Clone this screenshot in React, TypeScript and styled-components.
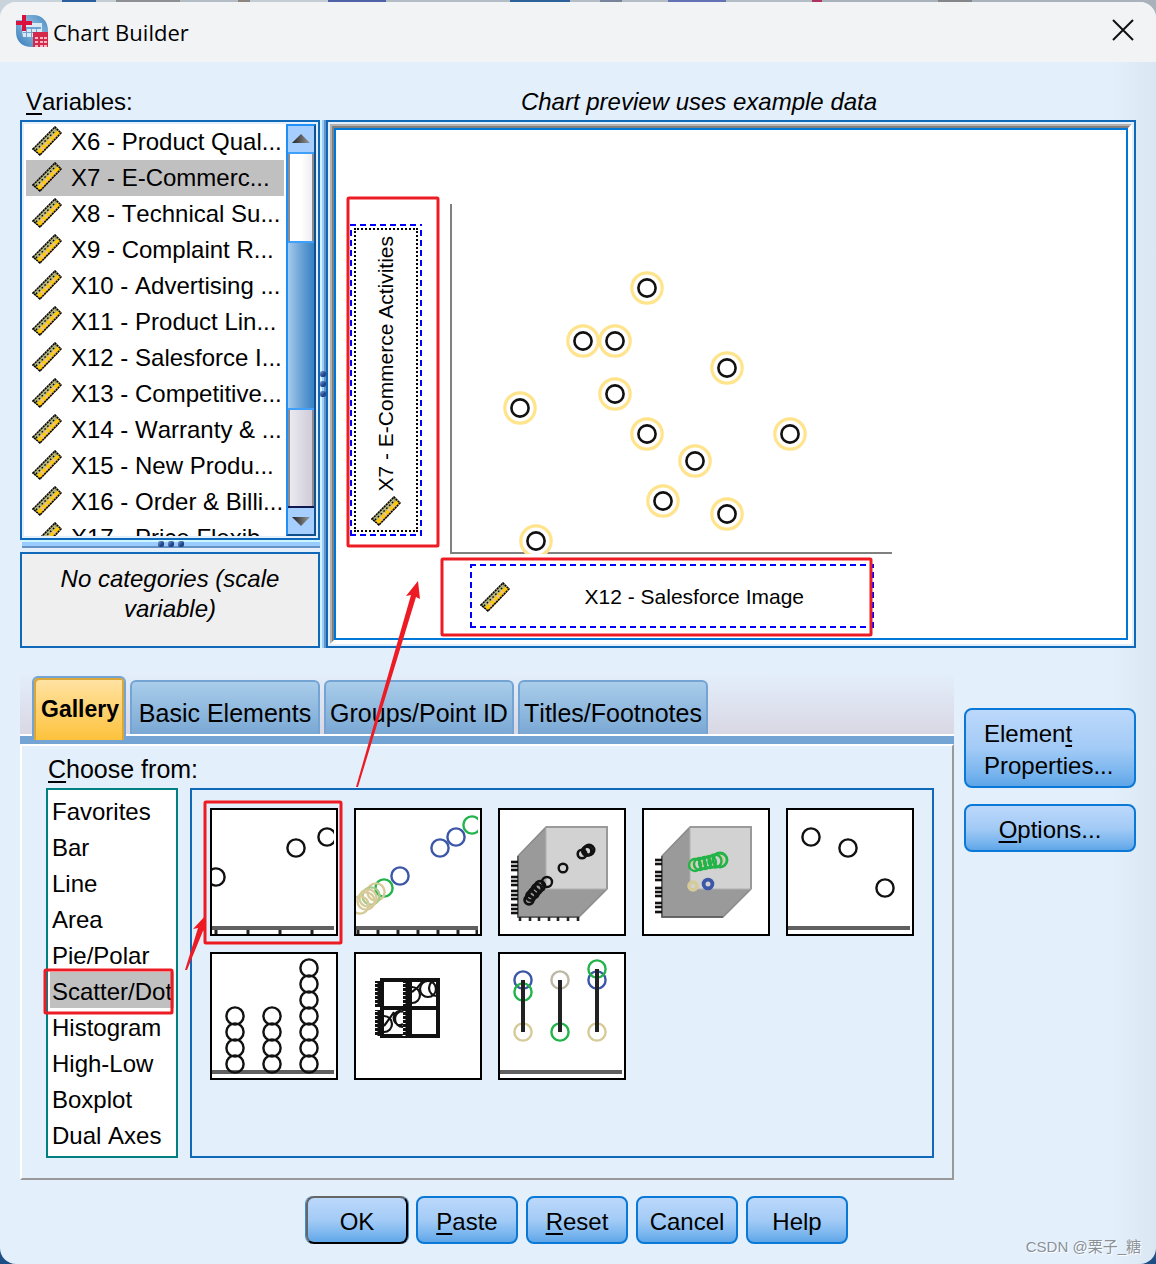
import React from "react";
import styled, { createGlobalStyle, css } from "styled-components";

const blue = "#1068b8";
const surface = "#e3effb";
const sans = `"Liberation Sans", Arial, sans-serif`;

const GlobalStyle = createGlobalStyle`
  *, *::before, *::after { box-sizing: border-box; }
  body {
    margin: 0;
    background: #8fa3b5;
    color: #000;
    font-family: ${sans};
    font-size: 24px;
    font-kerning: none;
  }
  button { font: inherit; font-kerning: none; color: inherit; margin: 0; cursor: pointer; }
  ul { list-style: none; margin: 0; padding: 0; }
`;

const Desktop = styled.div`
  min-height: 100vh;
  display: flex;
  flex-direction: column;
  padding-top: 2px;
  background: linear-gradient(
      90deg,
      #c9d3dc 0 62px, #2c5f9e 62px 96px, #c4ccd4 96px 116px, #8d8f93 116px 180px,
      #b4bdc5 180px 238px, #8c8580 238px 250px, #c4ccd4 250px 328px, #4f62a8 328px 386px,
      #b4bdc5 386px 510px, #2c6299 510px 570px, #b4bdc5 570px 600px, #77839a 600px 622px,
      #b4bdc5 622px 668px, #6272b4 668px 726px, #b4bdc5 726px 812px, #b03060 812px 822px,
      #a9b2ba 822px 938px, #84868a 938px 972px, #a9b2ba 972px
    ) top / 100% 20px no-repeat,
    #1d4f86;
`;

const Window = styled.main`
  position: relative;
  flex: 1;
  display: flex;
  flex-direction: column;
  border-radius: 16px;
  overflow: hidden;
  background: linear-gradient(270deg, #dbe6f3, ${surface} 44px);
`;

const TitleBar = styled.header`
  display: flex;
  align-items: center;
  height: 60px;
  padding: 0 20px 2px 16px;
  gap: 5px;
  background: #f2f3f5;
`;

const WindowTitle = styled.h1`
  flex: 1;
  margin: 0;
  padding-top: 2px;
  font: 400 22px/32px "Open Sans", "Noto Sans", sans-serif;
`;

const CloseButton = styled.button`
  display: grid;
  place-items: center;
  width: 26px;
  height: 28px;
  padding: 0 0 2px;
  border: 0;
  background: none;
`;

const Content = styled.div`
  display: flex;
  flex-direction: column;
  padding: 0 20px 20px;
`;

const Key = styled.span`
  text-decoration: underline;
  text-decoration-thickness: 2px;
  text-underline-offset: 3px;
  text-decoration-skip-ink: none;
`;

const Headings = styled.div`
  display: grid;
  grid-template-columns: 300px 1fr;
  column-gap: 6px;
  height: 58px;
  padding-top: 24px;
  line-height: 32px;
`;

const VariablesHeading = styled.span`
  padding-left: 6px;
`;

const PreviewHeading = styled.span`
  text-align: center;
  font-style: italic;
  padding-right: 64px;
`;

const Workspace = styled.section`
  display: flex;
  height: 528px;
`;

const VariableColumn = styled.div`
  display: flex;
  flex-direction: column;
  width: 300px;
`;

const VariableBox = styled.div`
  display: flex;
  height: 420px;
  padding: 2px;
  border: 2px solid ${blue};
  background: ${surface};
`;

const VariableList = styled.ul`
  flex: 1;
  min-width: 0;
  overflow: hidden;
  padding: 0 2px;
  background: #fff;
`;

const Variable = styled.li<{ $selected?: boolean }>`
  display: flex;
  align-items: center;
  gap: 9px;
  height: 36px;
  padding-left: 6px;
  line-height: 38px;
  white-space: nowrap;
  background: ${(p) => (p.$selected ? "#c0c0c0" : "transparent")};

  svg { flex: none; margin-bottom: 2px; }
`;

const ScrollBar = styled.div`
  display: flex;
  flex-direction: column;
  width: 30px;
  border: solid;
  border-width: 2px;
  border-color: #2090f8 #10508c #10508c #2090f8;
`;

const ScrollButton = styled.button<{ $down?: boolean }>`
  display: grid;
  place-items: center;
  height: 28px;
  padding: 0;
  border: 0 solid ${(p) => (p.$down ? "#101850" : "#409ff8")};
  border-width: ${(p) => (p.$down ? "2px 0 0" : "0 0 2px")};
  background: #a6ceff;

  svg { transform: ${(p) => (p.$down ? "scaleY(-1)" : "none")}; }
`;

const Track = styled.div<{ $lower?: boolean }>`
  flex: ${(p) => (p.$lower ? "97" : "88")};
  border: solid #8c8c90;
  border-width: 0 2px;
  background: ${(p) =>
    p.$lower ? "linear-gradient(90deg, #ebe9f0, #cfccd9)" : "linear-gradient(90deg, #fff 50%, #eeeef2)"};
`;

const Thumb = styled.div`
  flex: 168;
  border: solid #409ff8;
  border-width: 2px 0;
  background: linear-gradient(90deg, #a5caeb, #6ba3d6 50%, #3580c4);
`;

const RowSplitter = styled.div`
  display: flex;
  justify-content: center;
  align-items: center;
  gap: 4px;
  height: 8px;
  margin: 0 0 4px 2px;
  border-top: 2px solid #cdf6ff;
  border-bottom: 2px solid #6492c4;
  background: #99ccff;
`;

const ColumnSplitter = styled.div`
  display: flex;
  flex-direction: column;
  justify-content: center;
  align-items: center;
  gap: 4px;
  width: 6px;
  border-left: 2px solid #d4f2ff;
  border-right: 2px solid #6492c4;
  background: #99ccff;
`;

const Grip = styled.i`
  flex: none;
  width: 6px;
  height: 6px;
  border-radius: 2px;
  background: linear-gradient(135deg, #7fa6d6, #24448a 60%);
`;

const CategoryNote = styled.p`
  flex: 1;
  margin: 0;
  padding: 10px 16px;
  border: 2px solid ${blue};
  background: #efefef;
  font-style: italic;
  line-height: 30px;
  text-align: center;
`;

const PreviewFrame = styled.div`
  flex: 1;
  display: flex;
  min-width: 0;
  padding: 2px;
  border: 2px solid ${blue};
  background: ${surface};
`;

const Bevel = styled.div<{ $shade: string }>`
  flex: 1;
  display: flex;
  border: 2px solid;
  border-color: ${(p) => p.$shade} #fff #fff ${(p) => p.$shade};
`;

const Canvas = styled.div`
  flex: 1;
  display: grid;
  grid-template: 350px 64px / 72px 442px;
  gap: 10px 28px;
  padding: 74px 0 0 14px;
  border: 2px solid #0078d7;
  background: #fff;
`;

const dashed = (color: string) => css`
  background-image:
    repeating-linear-gradient(90deg, ${color} 0 6px, transparent 6px 10px),
    repeating-linear-gradient(90deg, ${color} 0 6px, transparent 6px 10px),
    repeating-linear-gradient(0deg, ${color} 0 6px, transparent 6px 10px),
    repeating-linear-gradient(0deg, ${color} 0 6px, transparent 6px 10px);
  background-size: 100% 2px, 100% 2px, 2px 100%, 2px 100%;
  background-position: top, bottom, left, right;
  background-repeat: no-repeat;
`;

const YZone = styled.div`
  margin: 20px 0 18px;
  padding: 4px;
  ${dashed("#0000ff")}
`;

const YZoneFocus = styled.div`
  display: flex;
  flex-direction: column;
  justify-content: flex-end;
  align-items: center;
  gap: 4px;
  height: 100%;
  padding-bottom: 4px;
  border: 2px dotted #000;
`;

const YLabel = styled.span`
  writing-mode: vertical-rl;
  transform: rotate(180deg);
  font-size: 21px;
  line-height: 24px;
  white-space: nowrap;
`;

const XZone = styled.div`
  grid-column: 2;
  display: flex;
  align-items: center;
  margin: 0 18px 0 20px;
  padding: 2px 70px 0 10px;
  ${dashed("#0000ff")}
`;

const XLabel = styled.span`
  flex: 1;
  text-align: right;
  font-size: 21px;
  line-height: 24px;
`;

const Lower = styled.section`
  display: flex;
  gap: 10px;
  margin-top: 24px;
`;

const Tabs = styled.div`
  flex: 1;
  min-width: 0;
`;

const TabStrip = styled.div`
  display: flex;
  align-items: flex-end;
  gap: 4px;
  height: 64px;
  padding-left: 12px;
  border-bottom: 2px solid #fff;
  background: linear-gradient(${surface}, #d9d7e4);
`;

const Tab = styled.button`
  min-width: 190px;
  height: 54px;
  padding: 10px 4px 0;
  border: 2px solid #73a4d4;
  border-bottom: 0;
  border-radius: 6px 6px 0 0;
  background: linear-gradient(#a9cdea, #7aa8d4);
  font-size: 25px;
  line-height: 30px;
  white-space: nowrap;
`;

const ActiveTab = styled(Tab)`
  z-index: 1;
  min-width: 94px;
  height: 64px;
  margin-bottom: -6px;
  padding: 0 2px 0 4px;
  background: linear-gradient(#ffe3a6, #fdc23c);
  box-shadow: inset 2px 2px #d9a63a, inset -2px 0 #d9a63a;
  font-size: 23px;
  font-weight: 700;
`;

const TabPanel = styled.div`
  padding: 0 18px 20px 24px;
  border: 2px solid;
  border-color: #fff #999 #999 #fff;
`;

const Band = styled.div`
  height: 8px;
  background: #73a4d4;
`;

const ChooseHeading = styled.div`
  padding: 8px 2px 4px;
  font-size: 25px;
  line-height: 30px;
`;

const Chooser = styled.div`
  display: flex;
  gap: 12px;
  height: 370px;
`;

const TypeList = styled.ul`
  width: 132px;
  padding: 2px;
  border: 2px solid #008080;
  background: #fff;
`;

const ChartType = styled.li<{ $selected?: boolean }>`
  height: 36px;
  padding-left: 2px;
  overflow: hidden;
  line-height: 40px;
  white-space: nowrap;
  background: ${(p) => (p.$selected ? "#c0c0c0" : "transparent")};
`;

const Gallery = styled.div`
  flex: 1;
  display: flex;
  flex-wrap: wrap;
  align-content: flex-start;
  gap: 16px;
  padding: 18px;
  border: 2px solid ${blue};
`;

const Tile = styled.button`
  display: block;
  width: 128px;
  height: 128px;
  padding: 0;
  border: 2px solid #000;
  background: #fff;

  svg { display: block; }
`;

const SideButtons = styled.div`
  display: flex;
  flex-direction: column;
  gap: 16px;
  width: 172px;
  padding-top: 36px;
`;

const PushButton = styled.button<{ $default?: boolean }>`
  min-width: 102px;
  min-height: 48px;
  padding: 6px 8px 2px;
  border: 2px solid #0a78d7;
  border-radius: 8px;
  background: linear-gradient(#bcd8fb, #a3cbf6 50%, #7db7ef 80%, #5ea6e8);
  line-height: 32px;
  ${(p) =>
    p.$default &&
    css`
      border-color: #666 #000 #000 #666;
      box-shadow: -1px 0 #3a8fdd, 1px 0 #3a8fdd;
    `}
`;

const WideButton = styled(PushButton)`
  min-height: 80px;
  padding: 8px 8px 4px 18px;
  text-align: left;
`;

const Actions = styled.footer`
  display: flex;
  justify-content: center;
  gap: 8px;
  padding: 16px 2px 0 0;
`;

const Watermark = styled.span`
  position: absolute;
  right: 15px;
  bottom: 7px;
  font: 15px/20px "Liberation Sans", "Noto Sans CJK SC", sans-serif;
  color: #8b9199;
  text-shadow: 1px 1px #fff;
`;

const Marks = styled.svg`
  position: absolute;
  left: 0;
  top: 0;
  pointer-events: none;
`;

const Ruler = () => (
  <svg width="30" height="30" viewBox="0 0 30 30" aria-hidden="true">
    <path d="M1 23 23 1 29 7 8 29Z" fill="#ffc808" />
    <path d="M1 23 23 1 26 4 4 26Z" fill="#b4b782" />
    <path d="M9 21l4 4M13 17l4 4M17 13l4 4M21 9l4 4" stroke="#e8c49a" strokeWidth="2" />
    <path d="M1 23 23 1 29 7 8 29Z" fill="none" stroke="#000" strokeWidth="1.6" strokeDasharray="2.2 0.6" />
    <path d="M4 24 24 4" stroke="#000" strokeWidth="1.4" strokeDasharray="1.6 2.4" />
  </svg>
);

const Logo = () => (
  <svg width="32" height="32" viewBox="0 0 32 32" aria-hidden="true">
    <defs>
      <linearGradient id="orb" x1="0" y1="1" x2="1" y2="0">
        <stop offset="0" stopColor="#2c78b8" />
        <stop offset="0.55" stopColor="#8fbadd" />
        <stop offset="1" stopColor="#3f86c0" />
      </linearGradient>
    </defs>
    <path d="M6 0H17C27 0 32 7 32 16V32H16C6 32 0 26 0 17V5Z" fill="url(#orb)" />
    <path d="M5 8H26V22H7Z" fill="#d9e9f6" />
    <path d="M7 12h18v2H7zM7 17h18v1H7zM10 12h1v10h-1zM15 12h1v10h-1zM20 12h1v10h-1z" fill="#6ea3d0" />
    <path d="M0 0H6V5H0Z" fill="#f2f3f5" />
    <path d="M6 0h4v6h6v4h-6v6H6v-6H0V6h6z" fill="#d8113f" />
    <path d="M17 17H32V32H17Z" fill="#d5294c" />
    <path d="M19 22h3v2h-3zM24 22h3v2h-3zM28 22h3v2h-3zM19 26h3v2h-3zM24 26h3v2h-3zM28 26h3v2h-3zM19 30h3v2h-3zM24 30h3v2h-3zM28 30h3v2h-3z" fill="#f7b9c6" />
  </svg>
);

const Arrow = () => (
  <svg width="20" height="10" viewBox="0 0 20 10" aria-hidden="true">
    <defs>
      <linearGradient id="arrow">
        <stop offset="0" stopColor="#222" />
        <stop offset="1" stopColor="#999" />
      </linearGradient>
    </defs>
    <path d="M10 0 19 9H1Z" fill="url(#arrow)" />
  </svg>
);

const points = [
  [197, 84], [133, 137], [165, 137], [277, 164], [165, 190], [70, 204],
  [197, 230], [340, 230], [245, 257], [213, 297], [277, 310], [86, 337],
];

const Plot = () => (
  <svg width="442" height="350" viewBox="0 0 442 350" role="img" aria-label="Scatter plot">
    <path d="M1 0V349H442" fill="none" stroke="#808080" strokeWidth="2" />
    {points.map(([x, y]) => (
      <g key={`${x}-${y}`} fill="#fff">
        <circle cx={x} cy={y} r="15.2" stroke="#ffe48c" strokeWidth="3.2" />
        <circle cx={x} cy={y} r="8.6" stroke="#111" strokeWidth="2.6" />
      </g>
    ))}
  </svg>
);

const ink = "#111";
const navy = "#3c56a8";
const green = "#22b44a";
const tan = "#d6cb98";

type Dot = [number, number, string?, number?, number?];

const Dots = ({ items }: { items: Dot[] }) => (
  <g fill="none">
    {items.map(([x, y, color = ink, r = 8.6, w = 2.4], i) => (
      <circle key={i} cx={x} cy={y} r={r} stroke={color} strokeWidth={w} />
    ))}
  </g>
);

const Axis = ({ ticks = [] }: { ticks?: number[] }) => (
  <g>
    {ticks.map((x) => (
      <rect key={x} x={x - 1.5} y="118" width="3" height="6" fill="#222" />
    ))}
    <rect y="116" width="122" height="4" fill="#606060" />
  </g>
);

const Cube = ({ left, bottom = [] }: { left: number[]; bottom?: number[] }) => (
  <g>
    <path d="M46 17 18 46V107H79L107 79V17Z" fill="#9a9a9a" stroke="#8a8a8a" strokeWidth="1.5" />
    <path d="M46 17H107V79H46Z" fill="#d2d2d2" stroke="#b0b0b0" />
    <path d="M46 17H107V79" fill="none" stroke="#9a9a9a" strokeWidth="2" />
    <path d="M18 46V107H79" fill="none" stroke="#555" strokeWidth="1.6" />
    {left.map((y) => (
      <rect key={y} x="11" y={y - 1.3} width="7" height="2.6" fill="#111" />
    ))}
    {bottom.map((x) => (
      <rect key={x} x={x - 1.3} y="107" width="2.6" height="4" fill="#222" />
    ))}
  </g>
);

const column = (x: number, ys: number[]): Dot[] => ys.map((y) => [x, y]);

const Matrix = () => (
  <g fill="none" stroke="#111">
    <path d="M26 26H82V82H26ZM26 54H82" strokeWidth="4" />
    <path d="M51.500 25V83" strokeWidth="9" />
    <path d="M23 27V53M23 56V82" strokeWidth="8" />
    <path d="M20 29V52M20 57V82M48 29V52M48 57V82" stroke="#fff" strokeWidth="3" strokeDasharray="1 3" />
    <g strokeWidth="2.2">
      <path d="M56 33a8 8 0 0 1 0 16" />
      <circle cx="72" cy="35" r="8" />
      <path d="M81 42a8 8 0 1 1 0-16M66 28q-4 6-10 10" />
      <path d="M28 62a8 8 0 0 1 0 16" />
      <path d="M47 73a8 8 0 1 1 0-16M47 70a6 7 0 1 1 0-12M38 58q-4 6-10 14" />
    </g>
  </g>
);

const thumbnails: { name: string; art: React.ReactNode }[] = [
  {
    name: "Simple Scatter",
    art: (
      <>
        <Dots items={[[4, 67], [84, 38], [115, 27]]} />
        <Axis ticks={[4, 36, 68, 100]} />
      </>
    ),
  },
  {
    name: "Grouped Scatter",
    art: (
      <>
        <Dots
          items={[
            [84, 38, navy], [100, 27, navy], [116, 15, green], [44, 66, navy], [28, 78, green],
            [20, 82, tan], [15, 86, "#a9c98a"], [12, 88, tan], [10, 91, tan], [4, 95, tan],
          ]}
        />
        <Axis ticks={[2, 22, 42, 62, 82, 102, 121]} />
      </>
    ),
  },
  {
    name: "Simple 3-D Scatter",
    art: (
      <>
        <Cube left={[52, 56, 60, 67, 71, 75, 81, 85, 89, 95, 99, 103]} bottom={[20, 30, 39, 49, 58, 68, 78]} />
        <Dots
          items={[
            [63, 58, ink, 4.3, 2.4], [82, 44, ink, 4.3, 2.6], [87, 41, ink, 4.6, 3], [89, 40, ink, 5, 3],
            [47, 72, ink, 5, 2.4], [40, 76, ink, 4.8, 2.8], [37, 79, ink, 4.8, 2.8], [34, 83, ink, 4.8, 2.8],
            [31, 86, ink, 4.6, 2.8], [29, 90, ink, 4.4, 2.8],
          ]}
        />
      </>
    ),
  },
  {
    name: "Grouped 3-D Scatter",
    art: (
      <>
        <Cube left={[50, 54, 62, 66, 70, 78, 82, 86, 93, 97, 102]} />
        <Dots
          items={[
            [54, 54, tan, 6], [64, 52, tan, 6], [73, 50, tan, 6],
            [51, 55, green, 6], [56, 54, green, 6], [61, 53, green, 6], [66, 52, green, 6], [71, 51, green, 6.5],
            [76, 50, green, 7, 2.8], [49, 76, tan, 4, 3.6], [64, 74, navy, 4.4, 3.8],
          ]}
        />
      </>
    ),
  },
  {
    name: "Summary Point Plot",
    art: (
      <>
        <Dots items={[[23, 27], [60, 38], [97, 78]]} />
        <Axis />
      </>
    ),
  },
  {
    name: "Simple Dot Plot",
    art: (
      <>
        <Axis />
        <Dots
          items={[
            ...column(23, [110, 94, 78, 62]),
            ...column(60, [110, 94, 78, 62]),
            ...column(97, [110, 94, 78, 62, 46, 30, 14]),
          ]}
        />
      </>
    ),
  },
  { name: "Scatterplot Matrix", art: <Matrix /> },
  {
    name: "Drop-line",
    art: (
      <>
        <Dots
          items={[
            [23, 26, navy], [23, 38, green], [23, 78, tan], [60, 26, "#bdb8a4"], [60, 78, green],
            [97, 26, navy], [97, 15, green], [97, 78, tan],
          ]}
        />
        <path d="M23 26V78M97 15V78M60 26V78" stroke="#222" strokeWidth="4" />
        <Axis />
      </>
    ),
  },
];

const variables = [
  "X6 - Product Qual...", "X7 - E-Commerc...", "X8 - Technical Su...", "X9 - Complaint R...",
  "X10 - Advertising ...", "X11 - Product Lin...", "X12 - Salesforce I...", "X13 - Competitive...",
  "X14 - Warranty & ...", "X15 - New Produ...", "X16 - Order & Billi...", "X17 - Price Flexib...",
];

const chartTypes = [
  "Favorites", "Bar", "Line", "Area", "Pie/Polar", "Scatter/Dot", "Histogram", "High-Low", "Boxplot", "Dual Axes",
];

export default function App() {
  return (
    <Desktop>
      <GlobalStyle />
      <Window>
        <TitleBar>
          <Logo />
          <WindowTitle>Chart Builder</WindowTitle>
          <CloseButton aria-label="Close">
            <svg width="22" height="22" viewBox="0 0 22 22" aria-hidden="true">
              <path d="M1 1 21 21M21 1 1 21" stroke="#111" strokeWidth="2" />
            </svg>
          </CloseButton>
        </TitleBar>

        <Content>
          <Headings>
            <VariablesHeading id="variables"><Key>V</Key>ariables:</VariablesHeading>
            <PreviewHeading>Chart preview uses example data</PreviewHeading>
          </Headings>

          <Workspace>
            <VariableColumn>
              <VariableBox>
                <VariableList role="listbox" aria-labelledby="variables">
                  {variables.map((name, i) => (
                    <Variable key={name} role="option" aria-selected={i === 1} $selected={i === 1}>
                      <Ruler />
                      {name}
                    </Variable>
                  ))}
                </VariableList>
                <ScrollBar>
                  <ScrollButton aria-label="Scroll up"><Arrow /></ScrollButton>
                  <Track />
                  <Thumb />
                  <Track $lower />
                  <ScrollButton aria-label="Scroll down" $down><Arrow /></ScrollButton>
                </ScrollBar>
              </VariableBox>
              <RowSplitter><Grip /><Grip /><Grip /></RowSplitter>
              <CategoryNote>No categories (scale variable)</CategoryNote>
            </VariableColumn>
            <ColumnSplitter><Grip /><Grip /><Grip /></ColumnSplitter>
            <PreviewFrame>
              <Bevel $shade="#b2b2b2">
                <Bevel $shade="#808080">
                  <Canvas>
                    <YZone>
                      <YZoneFocus>
                        <YLabel>X7 - E-Commerce Activities</YLabel>
                        <Ruler />
                      </YZoneFocus>
                    </YZone>
                    <Plot />
                    <XZone>
                      <Ruler />
                      <XLabel>X12 - Salesforce Image</XLabel>
                    </XZone>
                  </Canvas>
                </Bevel>
              </Bevel>
            </PreviewFrame>
          </Workspace>

          <Lower>
            <Tabs>
              <TabStrip role="tablist">
                <ActiveTab role="tab" aria-selected="true">Gallery</ActiveTab>
                <Tab role="tab">Basic Elements</Tab>
                <Tab role="tab">Groups/Point ID</Tab>
                <Tab role="tab">Titles/Footnotes</Tab>
              </TabStrip>
              <Band />
              <TabPanel role="tabpanel">
                <ChooseHeading id="choose"><Key>C</Key>hoose from:</ChooseHeading>
                <Chooser>
                  <TypeList role="listbox" aria-labelledby="choose">
                    {chartTypes.map((type) => (
                      <ChartType
                        key={type}
                        role="option"
                        aria-selected={type === "Scatter/Dot"}
                        $selected={type === "Scatter/Dot"}
                      >
                        {type}
                      </ChartType>
                    ))}
                  </TypeList>
                  <Gallery>
                    {thumbnails.map(({ name, art }) => (
                      <Tile key={name} aria-label={name}>
                        <svg width="122" height="124" viewBox="0 0 122 124" aria-hidden="true">{art}</svg>
                      </Tile>
                    ))}
                  </Gallery>
                </Chooser>
              </TabPanel>
            </Tabs>
            <SideButtons>
              <WideButton>Elemen<Key>t</Key><br />Properties...</WideButton>
              <PushButton><Key>O</Key>ptions...</PushButton>
            </SideButtons>
          </Lower>

          <Actions>
            <PushButton $default>OK</PushButton>
            <PushButton><Key>P</Key>aste</PushButton>
            <PushButton><Key>R</Key>eset</PushButton>
            <PushButton>Cancel</PushButton>
            <PushButton>Help</PushButton>
          </Actions>
        </Content>

        <Watermark>CSDN @栗子_糖</Watermark>
        <Marks width="960" height="1100" viewBox="0 2 960 1100" aria-hidden="true">
          <g fill="none" stroke="#ed1c24" strokeWidth="3" strokeLinejoin="round">
            <rect x="348" y="198" width="90" height="348" rx="1" />
            <rect x="442" y="559" width="429" height="76" rx="1" />
            <rect x="205" y="802" width="136" height="141" rx="1" />
            <rect x="45" y="970" width="127" height="43" rx="1" />
          </g>
          <path d="M356 787 411 595 406 596 418 581 420 599 416 597 358 787Z" fill="#ed1c24" />
          <path d="M185 970 198 928 193 929 206 915 206 930 203 931 187 970Z" fill="#ed1c24" />
        </Marks>
      </Window>
    </Desktop>
  );
}
